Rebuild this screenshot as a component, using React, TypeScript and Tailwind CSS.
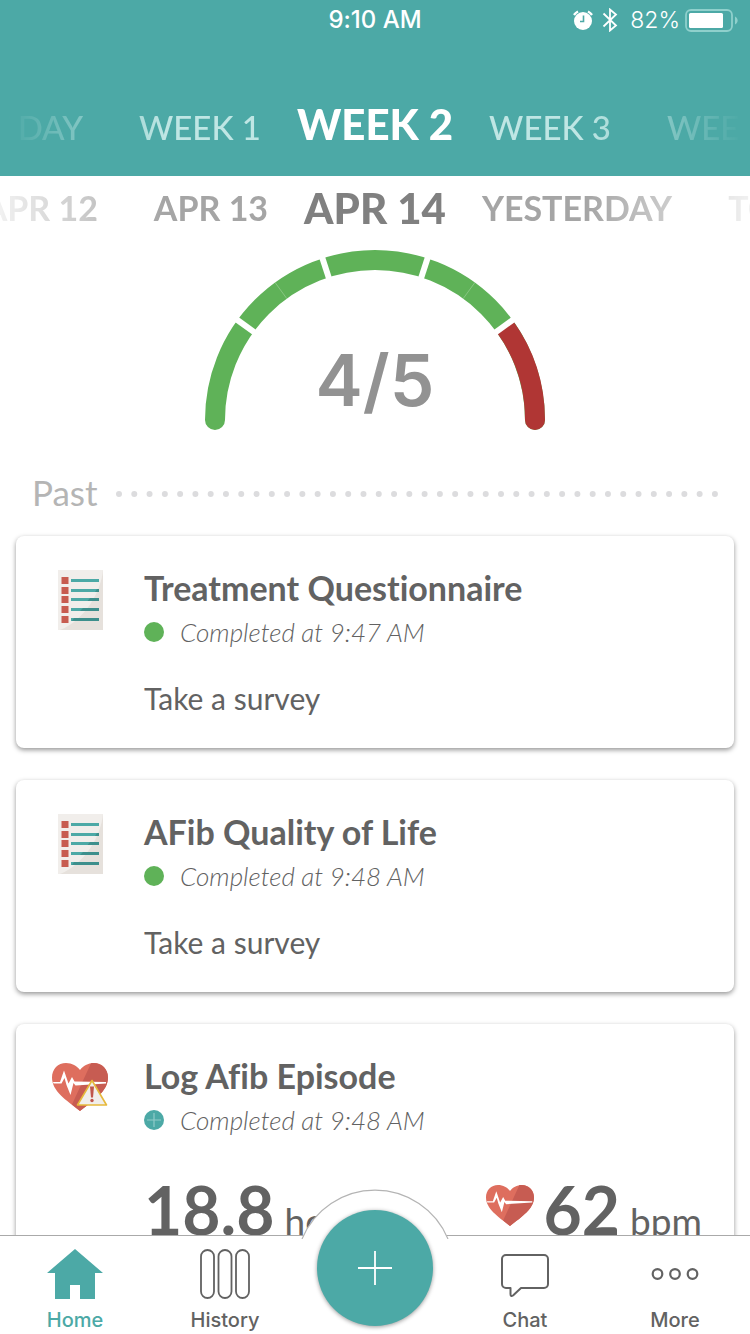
import type { ReactNode } from "react";

const BODY = "font-[Lato,'Open_Sans',sans-serif]";
const SYSTEM = "font-[Inter,'Liberation_Sans',sans-serif]";

function StatusBar() {
  return (
    <div className={`${SYSTEM} grid h-10 grid-cols-[1fr_auto_1fr] items-center text-[23px] leading-7`}>
      <span />
      <span className="text-2xl font-medium">9:10 AM</span>
      <div className="flex items-center justify-end pr-3">
        <svg width="22" height="20" viewBox="0 0 22 20" className="mr-2" aria-hidden="true">
          <circle cx="11" cy="11" r="9" fill="#fff" />
          <path d="M2 5A11 11 0 0 1 6 1.5M20 5A11 11 0 0 0 16 1.5" stroke="#fff" strokeWidth="2.4" fill="none" />
          <path d="M11.5 5.5v6H8" stroke="#4ca9a6" strokeWidth="1.6" fill="none" />
        </svg>
        <svg width="16" height="24" viewBox="0 0 16 24" className="mr-3" aria-hidden="true">
          <path d="M1.5 5.5 14 17.5 8 22.5V1.5L14 6.5 1.5 18.5" stroke="#fff" strokeWidth="1.8" fill="none" />
        </svg>
        <span className="mr-1 font-light">82%</span>
        <svg width="54" height="24" viewBox="0 0 54 24" aria-hidden="true">
          <rect x="2" y="2" width="46" height="21" rx="5" fill="none" stroke="#8fd0cc" strokeWidth="1.8" />
          <rect x="5" y="5" width="34" height="15" rx="1.5" fill="#fff" />
          <path d="M51 8.500c3.500 1.500 3.500 6.500 0 8z" fill="#8fd0cc" />
        </svg>
      </div>
    </div>
  );
}

type PickerProps = {
  label: string;
  before: string[];
  current: string;
  after: string[];
  className: string;
  currentClassName: string;
};

function Picker({ label, before, current, after, className, currentClassName }: PickerProps) {
  return (
    <div
      role="group"
      aria-label={label}
      className={`grid grid-cols-[minmax(0,1fr)_auto_minmax(0,1fr)] gap-9 overflow-hidden whitespace-nowrap leading-10 ${className}`}
    >
      <div className="flex justify-end gap-14">
        {before.map((t) => (
          <button key={t} type="button" className="shrink-0">{t}</button>
        ))}
      </div>
      <button type="button" aria-current="true" className={`text-[42px] font-black ${currentClassName}`}>
        {current}
      </button>
      <div className="flex gap-14">
        {after.map((t) => (
          <button key={t} type="button" className="shrink-0">{t}</button>
        ))}
      </div>
    </div>
  );
}

function gaugePoint(angle: number, r: number) {
  const a = (angle * Math.PI) / 180;
  return { x: 180 - r * Math.cos(a), y: 180 - r * Math.sin(a) };
}

function Gauge() {
  const split = gaugePoint(144, 160);
  return (
    <div className="relative mx-auto w-90">
      <svg width="360" height="200" viewBox="0 0 360 200" fill="none" className="block" aria-hidden="true">
        <path d="M20 180A160 160 0 0 1 340 180" stroke="#5fb258" strokeWidth="20" strokeLinecap="round" />
        <path d={`M${split.x} ${split.y}A160 160 0 0 1 340 180`} stroke="#b03634" strokeWidth="20" />
        <path d="M330 180a10 10 0 0 0 20 0z" fill="#b03634" />
        {[36, 72, 108, 144].map((a) => {
          const p = gaugePoint(a, 146);
          const q = gaugePoint(a, 174);
          return <line key={a} x1={p.x} y1={p.y} x2={q.x} y2={q.y} stroke="#fff" strokeWidth="6" />;
        })}
        {[54, 126].map((a) => {
          const p = gaugePoint(a, 150);
          const q = gaugePoint(a, 170);
          return <line key={a} x1={p.x} y1={p.y} x2={q.x} y2={q.y} stroke="#fff" strokeOpacity="0.25" strokeWidth="1" />;
        })}
      </svg>
      <p className={`${SYSTEM} absolute inset-x-0 top-24 text-center text-[71px] leading-[88px] font-semibold text-[#929292]`}>4/5</p>
    </div>
  );
}

function SurveyIcon() {
  return (
    <svg width="45" height="60" viewBox="0 0 45 60" aria-hidden="true">
      <path d="M0 0h45v60H0z" fill="#f1eeeb" />
      <path d="M45 0C43 22 27 50 2 60h43z" fill="#e6e1dc" />
      {[7, 17, 26, 36, 46].map((y) => (
        <g key={y}>
          <rect x="3.500" y={y} width="7" height="7" fill="#c75c50" />
          <rect x="13" y={y + 2} width="28" height="3" fill="#4ca9a6" />
        </g>
      ))}
      <path d="M39 19h2v3h-4zM32 28h9v3H29.500zM25 38h16v3H22zM16 48h25v3H14z" fill="#3d8f8c" />
    </svg>
  );
}

function HeartShape() {
  return (
    <>
      <path d="M28 49C14 38 0 29 0 15.500 0 7 6 1 14 1c6 0 11 3 14 7 3-4 8-7 14-7 8 0 14 6 14 14.500C56 29 42 38 28 49z" fill="#de6e5e" />
      <path d="M39 1.200C49 0 56 7 56 15.500 56 29 42 38 28 49l-8-6.500z" fill="#c75c52" />
      <path d="M1 20h7l4-11.500 4.500 13L20 15l2.500 4.500 31.500.5v1.600L23.500 23.500 21.500 21 18.500 33l-4-10L12.500 16l-3 5.500H1.500z" fill="#fff" />
    </>
  );
}

function HeartIcon({ warning = false }: { warning?: boolean }) {
  if (!warning) {
    return (
      <svg width="48" height="43" viewBox="0 0 56 50" aria-hidden="true">
        <HeartShape />
      </svg>
    );
  }
  return (
    <svg width="56" height="50" viewBox="0 0 56 50" aria-hidden="true">
      <HeartShape />
      <path d="M40 18.500 54.500 43H25.500z" fill="#f1eeeb" stroke="#e6b93c" strokeWidth="1.600" strokeLinejoin="round" />
      <path d="M38 24.500h4l-1 11h-2z" fill="#c0564c" />
      <circle cx="40" cy="38.500" r="1.700" fill="#c0564c" />
    </svg>
  );
}

function Card({ icon, title, status, time, children }: { icon: ReactNode; title: string; status: ReactNode; time: string; children: ReactNode }) {
  return (
    <article className="grid min-h-53 grid-cols-[128px_minmax(0,1fr)] rounded-lg bg-white pt-[30px] text-[#626262] shadow-[0_2px_5px_rgba(0,0,0,0.42)]">
      <div className="flex justify-center pt-1">{icon}</div>
      <div>
        <h2 className="text-[34px] leading-11 font-bold">{title}</h2>
        <p className="flex items-center gap-4 text-[26px] leading-11 font-light italic">
          {status}
          {time}
        </p>
        {children}
      </div>
    </article>
  );
}

const doneDot = <span className="size-5 rounded-full bg-[#5fb258]" />;

const plusDot = (
  <svg width="20" height="20" viewBox="0 0 20 20" aria-hidden="true">
    <circle cx="10" cy="10" r="10" fill="#4ca9a6" />
    <path d="M10 3v14M3 10h14" stroke="#8fcbc8" strokeWidth="1.200" />
  </svg>
);

function Tab({ label, active = false, children }: { label: string; active?: boolean; children: ReactNode }) {
  return (
    <a
      href={`#${label.toLowerCase()}`}
      aria-current={active ? "page" : undefined}
      className={`flex flex-col items-center gap-1.5 pt-3 text-xl leading-7 font-medium ${active ? "text-[#4ca9a6]" : "text-[#626262]"}`}
    >
      {children}
      {label}
    </a>
  );
}

function TabBar() {
  return (
    <nav className={`${SYSTEM} relative grid h-[99px] shrink-0 grid-cols-5 border-t border-[#aaaaaa] bg-white`}>
      <Tab label="Home" active>
        <svg width="56" height="52" viewBox="0 0 56 52" aria-hidden="true">
          <path d="M28 1 56 25h-8v26H33V37H23v14H8V25H0z" fill="currentColor" />
        </svg>
      </Tab>
      <Tab label="History">
        <svg width="52" height="52" viewBox="0 0 52 52" fill="none" stroke="currentColor" strokeWidth="1.800" aria-hidden="true">
          <rect x="2" y="2" width="13" height="48" rx="6.500" />
          <rect x="19.500" y="2" width="13" height="48" rx="6.500" />
          <rect x="37" y="2" width="13" height="48" rx="6.500" />
        </svg>
      </Tab>
      <div className="relative">
        <svg width="150" height="50" viewBox="0 0 150 50" className="absolute -top-[47px] left-1/2 -translate-x-1/2" aria-hidden="true">
          <path d="M2 50A79 79 0 0 1 148 50z" fill="#fff" />
          <path d="M2 50A79 79 0 0 1 148 50" fill="none" stroke="#b4b4b4" strokeWidth="1.200" />
        </svg>
        <button
          type="button"
          aria-label="Add entry"
          className="absolute -top-[26px] left-1/2 flex size-29 -translate-x-1/2 items-center justify-center rounded-full bg-[#4ca9a6] shadow-[0_1px_4px_rgba(0,0,0,0.4)]"
        >
          <svg width="36" height="36" viewBox="0 0 36 36" aria-hidden="true">
            <path d="M18 1v34M1 18h34" stroke="#fff" strokeWidth="1.800" />
          </svg>
        </button>
      </div>
      <Tab label="Chat">
        <svg width="50" height="52" viewBox="0 0 50 52" fill="none" stroke="currentColor" strokeWidth="2" strokeLinejoin="round" aria-hidden="true">
          <path d="M6 7h38a4 4 0 0 1 4 4v25a4 4 0 0 1-4 4H21l-8 7.500q-2.500 1.500-2.500-1.500v-6H6a4 4 0 0 1-4-4V11a4 4 0 0 1 4-4z" />
        </svg>
      </Tab>
      <Tab label="More">
        <svg width="50" height="52" viewBox="0 0 50 52" fill="none" stroke="currentColor" strokeWidth="2.200" aria-hidden="true">
          <circle cx="7.500" cy="26" r="4.800" />
          <circle cx="25" cy="26" r="4.800" />
          <circle cx="42.500" cy="26" r="4.800" />
        </svg>
      </Tab>
    </nav>
  );
}

export default function App() {
  return (
    <div className={`${BODY} flex h-dvh flex-col overflow-hidden bg-white [font-variant-ligatures:none]`}>
      <header className="h-44 shrink-0 bg-[#4ca9a6] text-white">
        <StatusBar />
        <Picker
          label="Week"
          before={["FIRST DAY", "WEEK 1"]}
          current="WEEK 2"
          after={["WEEK 3", "WEEK 4"]}
          className="mt-16 items-baseline text-[33px] font-medium text-[#bfe6e4] mask-[linear-gradient(to_right,transparent_1%,black_22%,black_78%,transparent_99%)]"
          currentClassName="text-white"
        />
      </header>
      <main className="min-h-0 flex-1 overflow-y-auto [scrollbar-width:none]">
        <Picker
          label="Day"
          before={["APR 12", "APR 13"]}
          current="APR 14"
          after={["YESTERDAY", "TODAY"]}
          className="mt-3 items-center text-[34px] font-bold text-[#a5a5a5] mask-[linear-gradient(to_right,transparent_-4%,black_22%,black_78%,transparent_104%)]"
          currentClassName="text-[#808080]"
        />
        <div className="mt-3">
          <Gauge />
        </div>
        <div className="mt-7 flex items-center gap-4 px-8 text-[#b5b5b5]">
          <h1 className="text-[35px] leading-12">Past</h1>
          <svg height="6" className="mt-1 min-w-0 flex-1" aria-hidden="true">
            <line x1="5" y1="3" x2="100%" y2="3" stroke="#dcdcde" strokeWidth="6" strokeLinecap="round" strokeDasharray="0 15.280" />
          </svg>
        </div>
        <div className="mt-5 flex flex-col gap-8 px-4">
          <Card icon={<SurveyIcon />} title="Treatment Questionnaire" status={doneDot} time="Completed at 9:47 AM">
            <p className="mt-5 text-[30px] leading-12">Take a survey</p>
          </Card>
          <Card icon={<SurveyIcon />} title="AFib Quality of Life" status={doneDot} time="Completed at 9:48 AM">
            <p className="mt-5 text-[30px] leading-12">Take a survey</p>
          </Card>
          <Card icon={<span className="pt-1"><HeartIcon warning /></span>} title="Log Afib Episode" status={plusDot} time="Completed at 9:48 AM">
            <div className="mt-7 flex items-start justify-between pr-8 text-[37px] leading-20">
              <p className="flex items-baseline gap-2.5">
                <b className="text-[66px]">18.8</b> hours
              </p>
              <div className="flex items-start gap-2.5">
                <span className="mt-3.5"><HeartIcon /></span>
                <p className="flex items-baseline gap-2.5">
                  <b className="text-[66px]">62</b> bpm
                </p>
              </div>
            </div>
          </Card>
        </div>
      </main>
      <TabBar />
    </div>
  );
}
